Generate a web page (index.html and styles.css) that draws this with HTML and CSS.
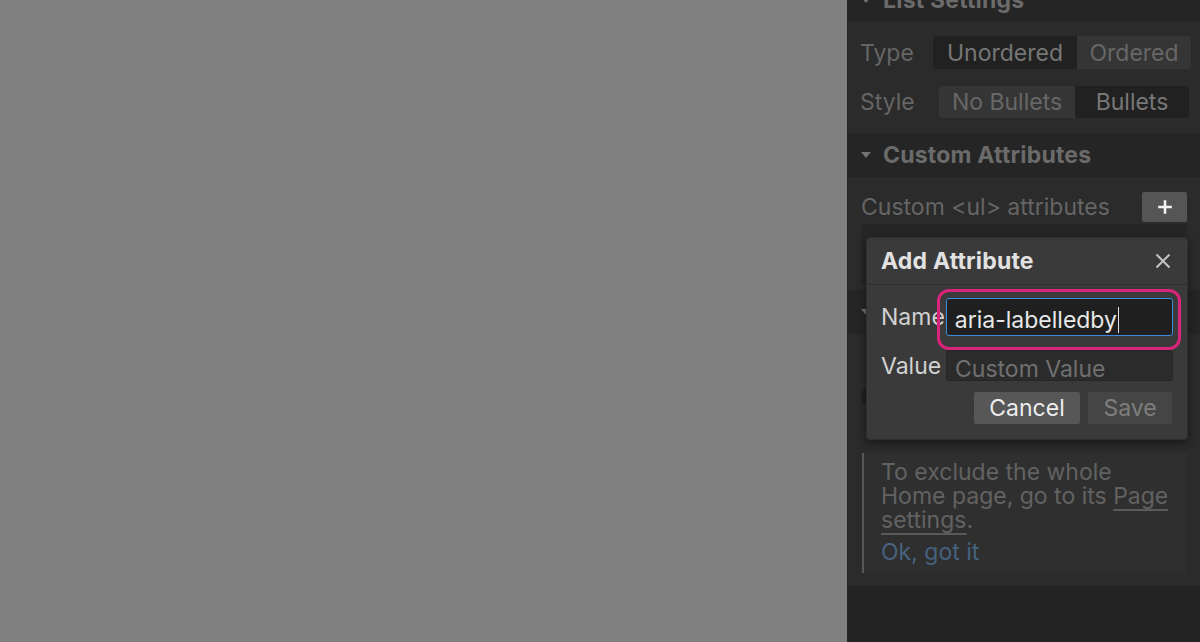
FILE: index.html
```html
<!DOCTYPE html>
<html lang="en">
<head>
<meta charset="utf-8">
<title>List Settings</title>
<link rel="stylesheet" href="styles.css">
</head>
<body>
<div class="app">
  <main class="canvas"></main>
  <aside class="panel">
    <section class="sec sec-first">
      <header class="sec-head"><span class="tri"></span><span>List Settings</span></header>
      <div class="list-body">
        <div class="row">
          <span class="lbl">Type</span>
          <div class="seg seg-type">
            <span class="seg-item dark w-unordered">Unordered</span>
            <span class="seg-item light w-ordered">Ordered</span>
          </div>
        </div>
        <div class="row">
          <span class="lbl">Style</span>
          <div class="seg seg-style">
            <span class="seg-item light w-nobullets">No Bullets</span>
            <span class="seg-item dark w-bullets">Bullets</span>
          </div>
        </div>
      </div>
    </section>

    <section class="sec">
      <header class="sec-head"><span class="tri"></span><span>Custom Attributes</span></header>
      <div class="attr-body">
        <div class="attr-row">
          <span class="lbl">Custom &lt;ul&gt; attributes</span>
          <button class="plus-btn" type="button" aria-label="Add attribute">
            <svg width="14" height="14" viewBox="0 0 14 14"><path d="M7 1.5v11M1.5 7h11" stroke="#f2f2f2" stroke-width="2.6" stroke-linecap="square"/></svg>
          </button>
        </div>
        <div class="attr-list"></div>
      </div>
    </section>

    <section class="sec">
      <header class="sec-head"><span class="tri"></span><span>Search</span></header>
      <div class="search-body">
        <div class="toggle-row"><span class="toggle"></span><span class="lbl">Exclude from site search</span></div>
        <div class="note">
          <p class="note-text">To exclude the whole<br>Home page, go to its <span class="note-link">Page</span><br><span class="note-link">settings</span>.</p>
          <span class="ok-link">Ok, got it</span>
        </div>
      </div>
    </section>

    <div class="panel-rest"></div>

    <div class="modal">
      <div class="modal-head">
        <span class="modal-title">Add Attribute</span>
        <svg class="close" width="16" height="16" viewBox="0 0 16 16"><path d="M1.5 1.5l13 13M14.5 1.5l-13 13" stroke="#c4c4c4" stroke-width="2"/></svg>
      </div>
      <div class="modal-body">
        <div class="field">
          <span class="field-lbl">Name</span>
          <div class="input focused"><span class="caret">aria-labelledby</span></div>
        </div>
        <div class="field">
          <span class="field-lbl">Value</span>
          <div class="input value-input"><span class="placeholder">Custom Value</span></div>
        </div>
        <div class="actions">
          <button class="btn btn-cancel" type="button">Cancel</button>
          <button class="btn btn-save" type="button">Save</button>
        </div>
      </div>
      <div class="highlight"></div>
    </div>
  </aside>
</div>
</body>
</html>
```

FILE: styles.css
```css
* { box-sizing: border-box; }
html, body { margin: 0; padding: 0; }
body {
  width: 1200px;
  height: 642px;
  overflow: hidden;
  background: #808080;
  font-family: Inter, "Noto Sans", "Liberation Sans", sans-serif;
  font-size: 23px;
}
.app {
  display: flex;
  height: 642px;
}
.canvas {
  flex: 0 0 847px;
  background: #808080;
}
.panel {
  position: relative;
  flex: 0 0 353px;
  display: flex;
  flex-direction: column;
  background: #2b2b2b;
  border-left: 1px solid #262626;
  overflow: hidden;
}
.sec-first { margin-top: -22px; }
.sec-head {
  height: 44px;
  display: flex;
  align-items: center;
  gap: 12px;
  padding-left: 13px;
  background: #252525;
  color: #6b6b6b;
  font-weight: 700;
  font-size: 23px;
  letter-spacing: 0.2px;
}
.tri {
  width: 0;
  height: 0;
  border-left: 5px solid transparent;
  border-right: 5px solid transparent;
  border-top: 6px solid #727272;
}
.lbl { color: #656565; white-space: nowrap; }

.list-body {
  display: flex;
  flex-direction: column;
  gap: 17px;
  padding: 14px 11px 15px 12px;
}
.row {
  display: flex;
  align-items: center;
  justify-content: space-between;
}
.seg {
  display: flex;
  border-radius: 3px;
  overflow: hidden;
}
.seg-type { height: 33px; margin-right: -2px; }
.seg-style { height: 32px; }
.seg-item {
  display: flex;
  align-items: center;
  justify-content: center;
}
.seg-item.dark { background: #212121; color: #777777; }
.seg-item.light { background: #353535; color: #676767; }
.w-unordered { width: 144px; }
.w-ordered { width: 114px; }
.w-nobullets { width: 136px; }
.w-bullets { width: 114px; }

.attr-body {
  padding: 15px 13px 6px 13px;
}
.attr-row {
  display: flex;
  align-items: center;
  justify-content: space-between;
}
.plus-btn {
  width: 45px;
  height: 30px;
  border: none;
  border-radius: 2px;
  background: #555555;
  padding: 0;
  display: flex;
  align-items: center;
  justify-content: center;
}
.attr-list {
  margin-top: 2px;
  height: 60px;
  background: #262626;
  border-radius: 2px;
}

.search-body {
  padding: 48px 14px 13px 13px;
  display: flex;
  flex-direction: column;
  gap: 43px;
}
.toggle-row { display: flex; align-items: center; gap: 12px; }
.toggle {
  width: 34px;
  height: 21px;
  border-radius: 10px;
  background: #202020;
}
.note {
  margin-left: 1px;
  background: #2f2f2f;
  border-left: 2px solid #575757;
  padding: 7px 10px 9px 17px;
  color: #626262;
  line-height: 24px;
}
.note-text { margin: 0; }
.note-link {
  text-decoration: underline;
  text-decoration-color: #5a5a5a;
  text-underline-offset: 5px;
  text-decoration-thickness: 1.5px;
}
.ok-link {
  display: block;
  margin-top: 8px;
  color: #46627f;
}
.panel-rest {
  flex: 1;
  background: #232323;
}

/* modal */
.modal {
  position: absolute;
  left: 18px;
  top: 237px;
  width: 322px;
  height: 203px;
  background: #3a3a3a;
  border: 1px solid #2f2f2f;
  border-radius: 4px;
  box-shadow: 0 3px 10px rgba(0, 0, 0, 0.45);
}
.modal-head {
  height: 47px;
  display: flex;
  align-items: center;
  justify-content: space-between;
  padding: 0 16px 0 14px;
  border-bottom: 1px solid #2d2d2d;
}
.modal-title {
  color: #e2e2e2;
  font-weight: 700;
  letter-spacing: 0.2px;
}
.modal-body {
  padding: 13px 14px 0 14px;
  display: flex;
  flex-direction: column;
}
.field {
  display: flex;
  align-items: center;
}
.field + .field { margin-top: 14px; }
.field-lbl {
  width: 65px;
  color: #d2d2d2;
  white-space: nowrap;
}
.input {
  width: 228px;
  border-radius: 3px;
  display: flex;
  align-items: center;
  padding-left: 8px;
}
.focused {
  height: 38px;
  background: #1f1f1f;
  border: 1px solid #3c8ddb;
  color: #e8e8e8;
  padding-top: 5px;
}
.caret {
  border-right: 1.5px solid #e0e0e0;
  padding-right: 1px;
  line-height: 26px;
}
.value-input {
  width: 227px;
  height: 31px;
  background: #2b2b2b;
  border: 1px solid #262626;
  padding-left: 8px;
  padding-top: 6px;
  overflow: hidden;
}
.placeholder { color: #707070; }
.actions {
  margin-top: 11px;
  display: flex;
  justify-content: flex-end;
  gap: 8px;
  padding-right: 1px;
}
.btn {
  height: 32px;
  border: none;
  border-radius: 2px;
  font-family: inherit;
  font-size: 23px;
  padding: 0;
}
.btn-cancel { width: 106px; background: #575757; color: #ededed; }
.btn-save { width: 84px; background: #454545; color: #7e7e7e; }
.highlight {
  position: absolute;
  left: 70px;
  top: 51px;
  width: 244px;
  height: 61px;
  border: 3px solid #d9247c;
  border-radius: 12px;
  pointer-events: none;
}
```
